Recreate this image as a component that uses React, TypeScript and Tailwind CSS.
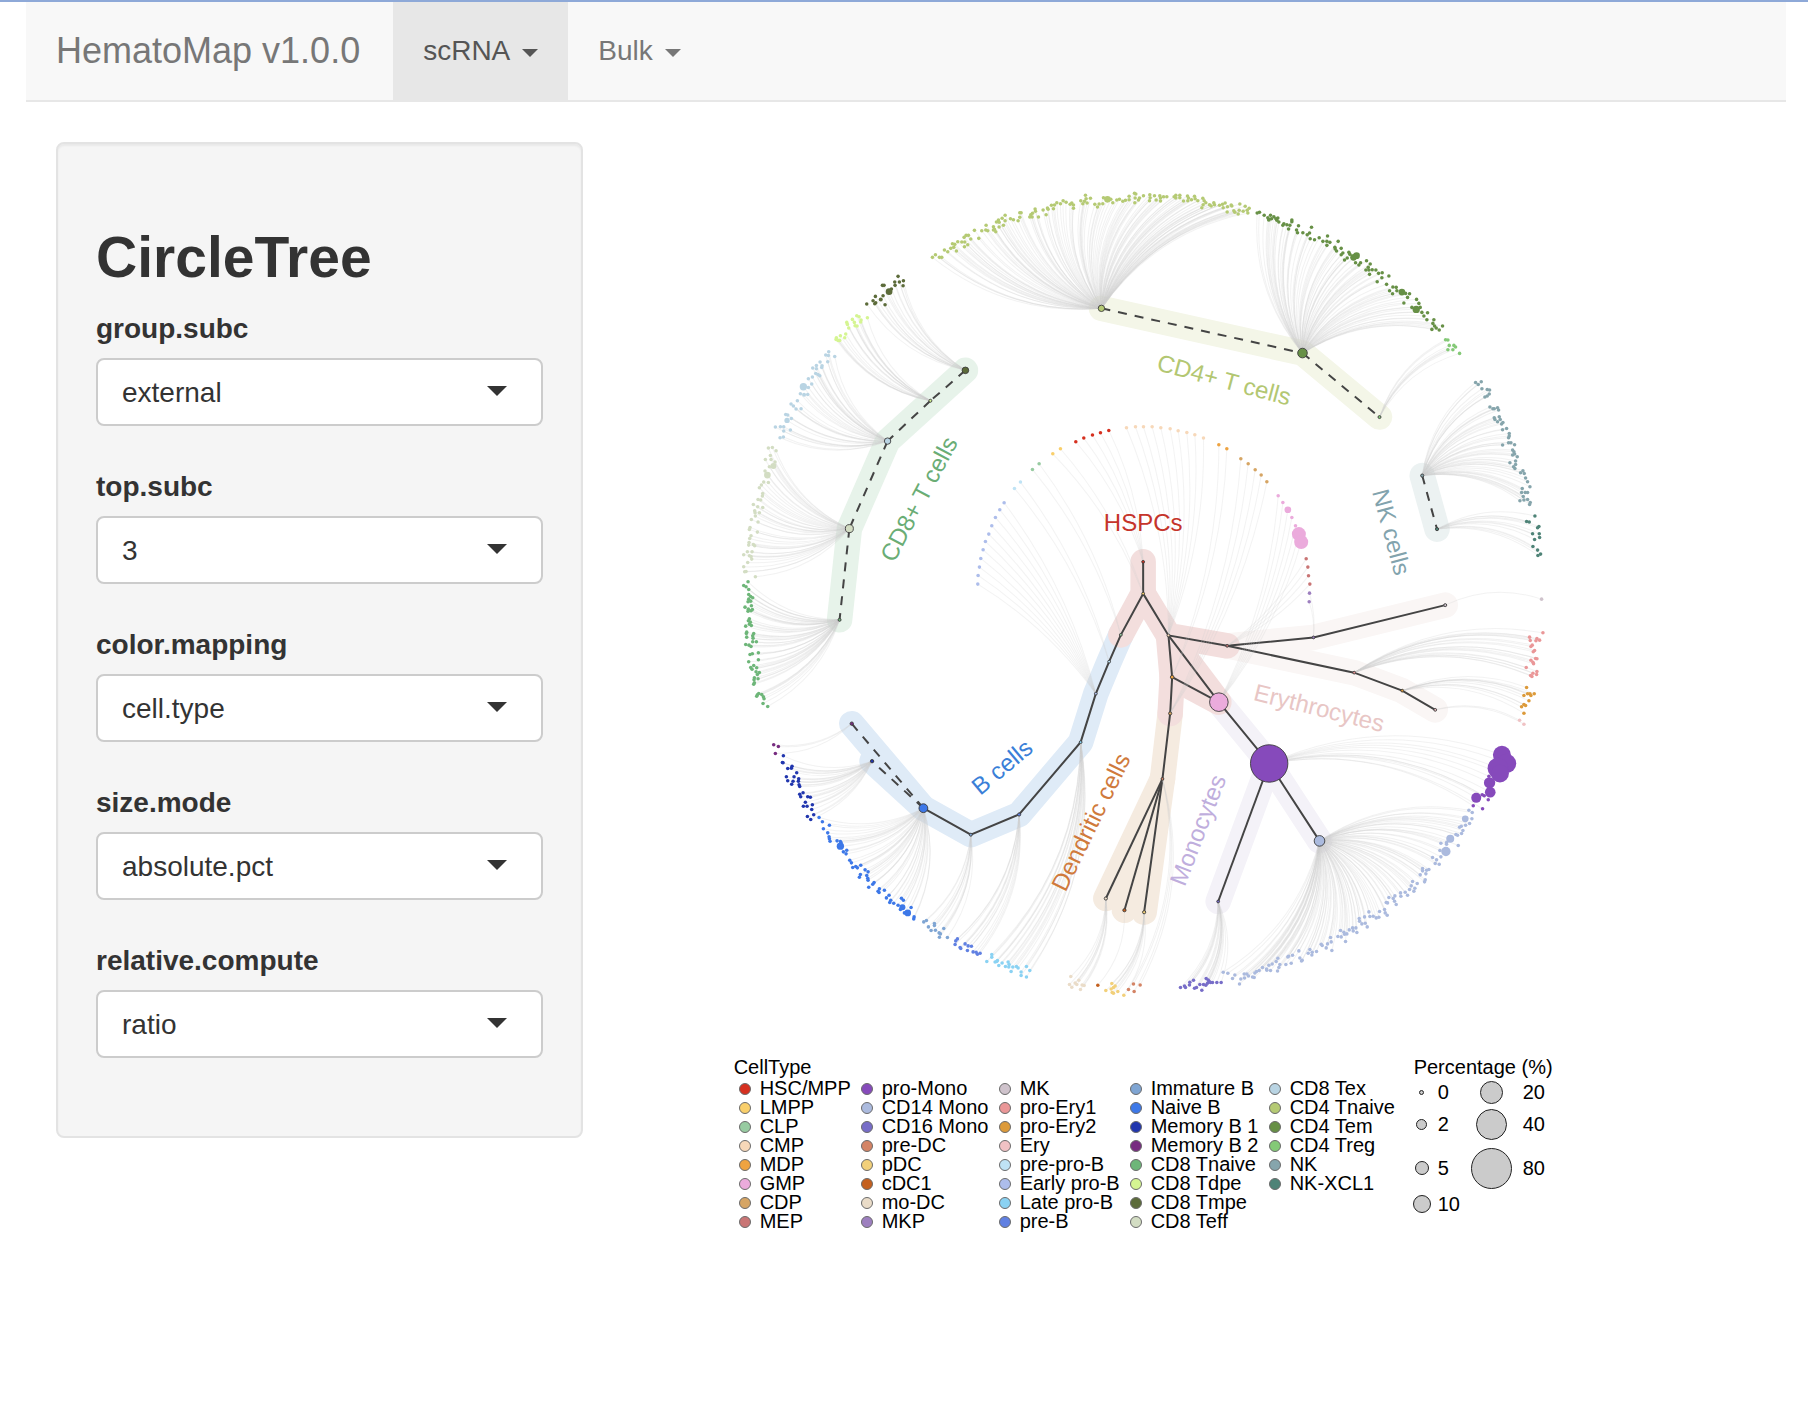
import React from "react";

type Point = { x: number; y: number };
type Leaf = Point & { r: number };
type NodeId = keyof typeof nodes;

const palette = {
  "HSC/MPP": "#d6301f",
  LMPP: "#f9cf6b",
  CLP: "#97cba1",
  CMP: "#f7d8b9",
  MDP: "#eea341",
  GMP: "#ebabdc",
  CDP: "#d6a564",
  MEP: "#c97575",
  "pro-Mono": "#864abb",
  "CD14 Mono": "#abbade",
  "CD16 Mono": "#776dc8",
  "pre-DC": "#d48465",
  pDC: "#f2d07a",
  cDC1: "#c4601f",
  "mo-DC": "#eadcc8",
  MKP: "#9d7fbf",
  MK: "#cfc3cc",
  "pro-Ery1": "#ea9798",
  "pro-Ery2": "#dc9a3a",
  Ery: "#f0c2c4",
  "pre-pro-B": "#bfe3f5",
  "Early pro-B": "#adbdeb",
  "Late pro-B": "#8ad2f3",
  "pre-B": "#6080e2",
  "Immature B": "#7fa5d3",
  "Naive B": "#3d78e8",
  "Memory B 1": "#2136ae",
  "Memory B 2": "#772c80",
  "CD8 Tnaive": "#6eb679",
  "CD8 Tdpe": "#d5f592",
  "CD8 Tmpe": "#5c6b3a",
  "CD8 Teff": "#d3ddc3",
  "CD8 Tex": "#b9d4e3",
  "CD4 Tnaive": "#b5ca74",
  "CD4 Tem": "#679046",
  "CD4 Treg": "#84c977",
  NK: "#86a5ac",
  "NK-XCL1": "#4e8377",
};

/* Tree nodes: x, y, radius */
const nodes = {
  "HSC/MPP": [1143, 561.7, 1.4],
  LMPP: [1143, 593.5, 1.4],
  CLP: [1120.7, 634.7, 1.4],
  CMP: [1168.3, 635.3, 1.4],
  MDP: [1172, 677, 1.8],
  GMP: [1218.7, 702, 9.3],
  CDP: [1170, 713.3, 1.6],
  MEP: [1227, 645.7, 1.4],
  "pro-Mono": [1269, 763.3, 18.7],
  "CD14 Mono": [1319.3, 840.7, 5.3],
  "CD16 Mono": [1218, 901.3, 1.4],
  "pre-DC": [1162.3, 778.7, 1.4],
  pDC: [1144, 912, 1.6],
  cDC1: [1124.3, 910, 1.6],
  "mo-DC": [1105.7, 898.3, 1.6],
  MKP: [1313.3, 637.3, 1.4],
  MK: [1445, 605, 1.5],
  "pro-Ery1": [1354, 672.5, 1.4],
  "pro-Ery2": [1402, 690.5, 1.4],
  Ery: [1435, 709.7, 1.4],
  "pre-pro-B": [1109, 661.5, 1.4],
  "Early pro-B": [1095.7, 693.5, 1.4],
  "Late pro-B": [1080.5, 742, 1.4],
  "pre-B": [1019, 814.3, 1.6],
  "Immature B": [970.7, 834.5, 1.5],
  "Naive B": [923.3, 808, 4.4],
  "Memory B 1": [872, 761, 1.7],
  "Memory B 2": [851.7, 723.5, 1.7],
  "CD8 Tnaive": [839.5, 619.7, 1.5],
  "CD8 Teff": [849.3, 528.5, 4],
  "CD8 Tex": [887.5, 441, 3.2],
  "CD8 Tdpe": [930.3, 400.7, 1.5],
  "CD8 Tmpe": [965.3, 370.3, 3.3],
  "CD4 Tnaive": [1101.3, 308.3, 3.2],
  "CD4 Tem": [1302.3, 353, 4.8],
  "CD4 Treg": [1379.3, 417, 1.5],
  NK: [1422, 475.5, 1.6],
  "NK-XCL1": [1436.8, 529, 1.6],
} as const;

/* Reads "x,y[,r] ..." tuples stored at triple resolution, relative to an origin. */
function cloud(ox: number, oy: number, data: string): Leaf[] {
  return data
    .trim()
    .split(/\s+/)
    .map((t) => {
      const [x, y, r = 5.3] = t.split(",").map(Number);
      return { x: ox + x / 3, y: oy + y / 3, r: r / 3 };
    });
}

const inner: [NodeId, Leaf[]][] = [
  ["Early pro-B", cloud(940, 400, "192,308 179,329 166,352 155,377 146,402 136,424 129,449 122,475 118,501 114,526 113,552")],
  ["pre-pro-B", cloud(940, 400, "241,246 223,265")],
  ["CLP", cloud(940, 400, "297,191 277,208")],
  ["LMPP", cloud(940, 400, "361,146 338,161")],
  ["HSC/MPP", cloud(940, 400, "407,125 431,114 457,105 481,98 506,91")],
  ["CMP", cloud(940, 400, "559,83 586,80 610,80 636,80 662,83 690,86 714,92 740,97 764,104 790,114")],
  ["MDP", cloud(940, 400, "836,134 860,146")],
  ["CDP", cloud(940, 400, "902,176 924,191 945,209 963,225 980,245")],
  ["GMP", cloud(940, 400, "1014,287 1028,307 1043,329,10 1055,352 1066,377 1076,402,21 1083,426,21")],
  ["MEP", cloud(940, 400, "1098,476 1103,501 1105,527 1109,552")],
  ["MKP", cloud(940, 400, "1108,579 1107,605")],
];

const outer: [NodeId, Leaf[]][] = [
  ["CD8 Tmpe", cloud(720, 170, "534,319 550,332 524,336 538,336 549,347 525,346 487,346 492,346 514,357 507,365,10 489,377 466,379 482,388,6 459,392 467,398 464,401 440,402 495,404")],
  ["CD8 Tdpe", cloud(720, 170, "410,437 417,440 442,443 397,448 423,450 422,456 380,457 403,457 382,463 405,467 411,468 386,474 377,492 361,497 374,503 349,503 348,508 354,511 359,511")],
  ["CD8 Tex", cloud(720, 170, "326,545 317,555 325,556 344,559 323,575 300,576 289,586 306,587 278,594 289,596 305,592 287,610 294,613 299,617 277,621 265,626 275,642 250,650,11 265,652 241,671 252,674,6 263,673 232,692 213,702 220,708 228,717 243,716 203,735 197,733 214,745 201,751,8 166,771 181,770 191,770 191,783 211,780 180,803 190,801")],
  ["CD8 Teff", [
    ...cloud(720, 170, "145,834 157,832 168,842 151,856 136,868 153,868 165,876 160,888,9 148,890 135,903 142,915,10 131,936 145,937 124,945 118,953 128,970 127,978 114,988 122,990 100,1003 113,1010 128,1012 104,1022 105,1028 118,1028 106,1038 94,1048 114,1056 90,1072 88,1078 112,1086"),
    ...cloud(720, 500, "93,107 89,115 87,127 86,135 100,133 104,137 96,155 82,155 71,164 88,167 93,169 95,177 83,187 71,200 78,214 74,215 106,230"),
  ]],
  ["CD8 Tnaive", cloud(720, 500, "84,245 71,256 78,260 86,268 86,283 92,289 98,293 86,297 84,305 92,303 75,321 94,317 85,327 93,332 97,328 84,333 88,356 85,362 91,366 88,372 94,376 77,378 80,396 101,400 79,400 98,407 80,411 99,414 98,425 109,425 77,433 87,435 93,439 90,463 97,461 115,458 115,479 86,485 101,496 92,502 96,507 110,503 108,515 118,517 112,523 103,533 114,536 102,539 103,548 101,552 116,580 112,584 110,588 125,583 130,590 132,596 129,610 143,619")],
  ["Memory B 2", cloud(740, 700, "101,134 115,139 106,160")],
  ["Memory B 1", cloud(740, 700, "130,167 129,188 127,187 156,198 143,205 154,204 170,218 139,230 162,230 176,236 143,242 159,243 175,243 155,252 177,254 179,259 189,278 179,282 182,290 203,290 211,291 196,306 190,318 201,318 217,314 215,328 202,349 221,344 212,358")],
  ["Naive B", cloud(740, 700, "237,352 247,365 268,375 250,386 263,398 267,410 268,416 270,423 291,422 301,424 303,428 301,438,11 320,450 310,455 318,461 329,480 334,488 338,502 347,499 352,503 362,495 375,509 384,515 361,523 358,531 380,526 383,534 384,540 402,547 398,552 386,561 418,566 433,570 414,573 417,577 447,585 439,593 452,600 449,607 461,609 484,594 490,600 474,615 487,621,9 481,628 513,622 493,638 503,638,10 522,650 521,656")],
  ["Immature B", cloud(740, 700, "551,665 559,661 583,670 583,676 565,680 573,691 586,690 611,685 597,698 601,701 598,711 622,712")],
  ["pre-B", cloud(740, 700, "652,716 647,722 645,733 660,742 662,745 675,731 684,737 694,738 682,751 699,755 708,756 712,762 720,759")],
  ["Late pro-B", cloud(740, 700, "755,763 755,771 740,784 765,785 772,781 770,784 776,796 786,788 804,785 796,799 807,793 806,800 818,800 813,814 829,799 834,803 859,799 869,811 843,815 843,826 859,830")],
  ["mo-DC", cloud(740, 700, "992,829 1016,840 988,853 1005,848 1010,853 995,861 1026,854 1032,856 1021,868")],
  ["cDC1", cloud(740, 700, "1073,855")],
  ["pDC", cloud(740, 700, "1115,850 1125,857 1120,862 1113,866 1097,871 1133,874 1116,877 1120,879 1151,885")],
  ["pre-DC", cloud(740, 700, "1180,851 1200,854 1165,868 1182,874")],
  ["CD16 Mono", cloud(1140, 680, "121,922 133,917 136,922 149,906 148,914 160,900 163,924 169,922 179,913 185,930 190,913 198,895 204,899 202,909 197,915 207,903 211,907 217,907 230,907 243,907")],
  ["CD14 Mono", cloud(1140, 680, "249,876 263,879 284,884 277,895 298,911 302,896 312,881 313,893 320,881 325,887 337,890 342,892 344,878 349,874 357,871 367,862 379,866 386,855 380,870 391,871 396,851 408,844 413,834 419,853 416,862 412,872 437,853 445,828 457,825 443,830 453,849 476,812 479,833 486,840 484,842 509,808 504,819 516,816 515,824 529,814 543,792 546,796 571,772 573,785 562,791 558,803 575,811 593,769 601,751 611,756 603,770 613,762 620,761 616,784 627,749 637,743 647,743 650,757 639,752 657,715 658,723 673,710 686,695 665,731 675,729 681,740 689,709 699,708 708,713 718,694 716,711 733,688 735,698 741,705 746,652 738,667 742,668 759,655 764,647 763,663 768,673 781,638 782,648 795,636 802,645 808,628 813,617 817,604 824,624 821,633 831,610 840,584 847,565 847,572 857,581 855,599 853,605 859,570 866,568 877,532 889,539 885,550 897,552 902,530 899,511 917,514,14 902,489 919,487 919,492 930,476,12 947,463 952,465 954,496 964,460 968,451 958,441 963,438 976,435 975,416,10 988,430 995,416 986,390 996,397")],
  ["pro-Mono", cloud(1140, 680, "1085,224,27 1099,250,29 1073,264,31 1079,280,27 1046,288 1048,308,17 1050,336,16 1026,344 1032,347 1008,353,15 1044,359 999,377 1027,386")],
  ["Ery", cloud(1140, 680, "1138,120 1151,132")],
  ["pro-Ery2", cloud(1140, 680, "1159,22 1151,46 1162,41 1169,41 1172,46 1182,41 1166,62 1151,73 1156,76 1144,80 1151,99")],
  ["pro-Ery1", cloud(1320, 560, "668,218 628,231 630,241 650,235 647,242 658,240 636,255 632,259 643,271 639,275 632,300 638,306 646,295 650,296 640,311 618,322 650,334 649,343 638,339 631,346 635,349")],
  ["MK", cloud(1320, 560, "664,117")],
  ["CD4 Tnaive", [
    ...cloud(720, 170, "637,262 646,254 658,262 665,262 673,240 683,245 692,235 701,232 697,221 709,243 713,215 704,223 725,216 734,216 733,230 743,224 732,202 738,196 745,196 752,207 763,181 776,205 785,182 798,166 797,180 803,182 820,170 823,178 827,185 820,180 837,171 829,156 835,150 855,136 846,145 855,152 850,166 837,157 871,146 880,149 899,128 903,128 899,142 894,152 945,117 946,124 932,134 937,130 929,141 936,141 955,141 969,120 978,134 982,114 984,118 994,106 1000,116 1003,105 1010,98 1021,101 1029,92 1038,97 1055,99 1050,103 1060,105 1060,115 1082,92 1096,76 1098,86 1111,85 1093,94 1101,99 1088,101 1124,103 1132,111 1137,102 1148,101 1150,83 1162,88,10 1172,88 1178,98 1190,90 1198,88 1208,94 1216,91 1227,79 1227,89"),
    ...cloud(1080, 170, "163,70 167,72 165,84 178,84 175,90 164,98 190,77 209,74 210,83 208,92 223,77 228,90 239,77 241,84 250,80 260,80 241,93 282,80 287,76 287,84 299,76 299,83 310,93 322,78 325,84 323,92 334,89 343,79 345,86 353,92 368,85 372,92 377,98 369,104 365,113 388,104 393,108 401,98 403,104 418,106 427,103 429,113 435,99 442,110 453,105 455,108 441,126 461,122 464,127 474,132 479,102 477,121 489,124 495,109 501,121 507,115 503,129"),
  ]],
  ["CD4 Tem", cloud(1080, 170, "531,129 538,127 552,136 571,136 563,143 566,149,6 574,146 581,140 587,146 593,144 590,151 596,156 611,161 608,166 620,164 629,166 635,150 635,155 625,177 655,167 649,180 652,188 668,188 681,194 688,189 694,172 690,206 703,209 717,203 728,214 742,198 740,214 749,217 740,226 774,214 764,232 765,237 769,243 783,235 788,249 783,254 793,270 806,247 809,253 801,264 820,262,10 829,257,10 826,278 841,278 836,285 859,272 870,282 864,292 857,300 866,300 876,299 887,300 868,313 895,310 906,308 905,323 926,318 891,335 919,343 928,362 938,351 948,352 937,371 950,362 965,366,10 976,370 988,371 982,382 971,399 1009,388 1016,400 995,412 1008,418,11 1020,412 1025,427 1031,438 1042,428 1040,449 1061,449 1058,460 1063,468 1055,478 1068,474 1077,480 1087,468")],
  ["CD4 Treg", cloud(1080, 170, "1096,509 1103,510 1107,526 1121,526 1126,531 1103,539 1118,539 1138,550")],
  ["NK", cloud(1080, 170, "1186,637 1194,643 1203,635 1205,656 1221,658 1228,660 1227,672 1221,678 1214,681 1229,711 1238,716 1242,716 1252,713 1255,720 1242,743 1244,748 1257,740 1260,748 1252,755 1264,762 1268,757 1279,775 1267,779 1287,790 1287,798 1285,803 1267,825 1285,818 1292,818 1303,824 1297,840 1301,845 1297,855 1303,852 1311,860 1306,873 1289,878 1306,883 1300,890 1304,895 1328,902 1321,908 1332,910 1336,924 1342,935 1349,950 1326,955 1324,967 1335,967 1342,967 1329,979 1319,992 1331,990 1342,988 1350,997 1348,1003")],
  ["NK-XCL1", cloud(1080, 170, "1364,1038 1339,1054 1347,1056 1376,1069 1372,1073 1357,1091 1377,1091 1378,1102 1363,1108 1358,1129 1372,1140 1381,1152 1373,1156")],
];

/* Lineage highlights, painted back to front */
const bands: { color: string; paths: NodeId[][] }[] = [
  { color: "#f4f6e8", paths: [["CD4 Tnaive", "CD4 Tem", "CD4 Treg"]] },
  { color: "#e7f3ea", paths: [["CD8 Tmpe", "CD8 Tex", "CD8 Teff", "CD8 Tnaive"]] },
  { color: "#ecf2f2", paths: [["NK", "NK-XCL1"]] },
  {
    color: "#dfebf7",
    paths: [
      ["CLP", "pre-pro-B", "Early pro-B", "Late pro-B", "pre-B", "Immature B", "Naive B", "Memory B 2"],
      ["Naive B", "Memory B 1"],
    ],
  },
  {
    color: "#faf6f5",
    paths: [
      ["MEP", "MKP", "MK"],
      ["MEP", "pro-Ery1", "pro-Ery2", "Ery"],
    ],
  },
  {
    color: "#f4f2f8",
    paths: [
      ["GMP", "pro-Mono", "CD14 Mono"],
      ["pro-Mono", "CD16 Mono"],
    ],
  },
  {
    color: "#f5ebe0",
    paths: [
      ["CDP", "pre-DC", "pDC"],
      ["pre-DC", "cDC1"],
      ["pre-DC", "mo-DC"],
    ],
  },
  {
    color: "#f3dedd",
    paths: [
      ["HSC/MPP", "LMPP", "CLP"],
      ["LMPP", "CMP", "MEP"],
      ["CMP", "MDP", "CDP"],
      ["CMP", "GMP", "MDP"],
    ],
  },
];

const solidEdges: NodeId[][] = [
  ["HSC/MPP", "LMPP", "CLP", "pre-pro-B", "Early pro-B", "Late pro-B", "pre-B", "Immature B", "Naive B"],
  ["LMPP", "CMP", "MEP", "MKP", "MK"],
  ["MEP", "pro-Ery1", "pro-Ery2", "Ery"],
  ["CMP", "MDP", "CDP", "pre-DC", "pDC"],
  ["pre-DC", "cDC1"],
  ["pre-DC", "mo-DC"],
  ["MDP", "GMP"],
  ["CMP", "GMP", "pro-Mono", "CD14 Mono"],
  ["pro-Mono", "CD16 Mono"],
];

const dashedEdges: NodeId[][] = [
  ["CD4 Tnaive", "CD4 Tem"],
  ["CD4 Tem", "CD4 Treg"],
  ["CD8 Tmpe", "CD8 Tdpe"],
  ["CD8 Tdpe", "CD8 Tex"],
  ["CD8 Tex", "CD8 Teff"],
  ["CD8 Teff", "CD8 Tnaive"],
  ["NK", "NK-XCL1"],
  ["Memory B 2", "Naive B"],
  ["Naive B", "Memory B 1"],
];

const lineageLabels = [
  { text: "HSPCs", x: 1143, y: 523, angle: 0, color: "#c5342b" },
  { text: "CD4+ T cells", x: 1224, y: 380, angle: 15, color: "#b3c772" },
  { text: "CD8+ T cells", x: 919, y: 499, angle: -62, color: "#6aad75" },
  { text: "NK cells", x: 1391, y: 532, angle: 75, color: "#82a3ad" },
  { text: "Erythrocytes", x: 1319, y: 708, angle: 14, color: "#e8c6c5" },
  { text: "B cells", x: 1002, y: 767, angle: -40, color: "#3a7fd8" },
  { text: "Dendritic cells", x: 1091, y: 822, angle: -64, color: "#d07a3c" },
  { text: "Monocytes", x: 1198, y: 830, angle: -69, color: "#bfaedd" },
];

function polyline(ids: NodeId[]) {
  return ids.map((id) => `${nodes[id][0]},${nodes[id][1]}`).join(" ");
}

/* Arc from a node to a leaf; positive bend bulges to the left of travel. */
function arc(id: NodeId, leaf: Point, bend: number) {
  const [x, y] = nodes[id];
  const dx = leaf.x - x;
  const dy = leaf.y - y;
  const cx = x + dx / 2 + dy * bend;
  const cy = y + dy / 2 - dx * bend;
  return `M${x} ${y}Q${cx.toFixed(1)} ${cy.toFixed(1)} ${leaf.x.toFixed(1)} ${leaf.y.toFixed(1)}`;
}

function CircleTreePlot() {
  return (
    <svg viewBox="643 142 1113 900" className="block w-full" role="img" aria-label="Circle tree of hematopoietic cell types">
      {bands.map((band) => (
        <g key={band.color} fill="none" stroke={band.color} strokeWidth="25.5" strokeLinecap="round" strokeLinejoin="round">
          {band.paths.map((p) => (
            <polyline key={p.join()} points={polyline(p)} />
          ))}
        </g>
      ))}
      <g fill="none" stroke="#444444" strokeWidth="2">
        {solidEdges.map((p) => (
          <polyline key={p.join()} points={polyline(p)} />
        ))}
        {dashedEdges.map((p) => (
          <polyline key={p.join()} points={polyline(p)} strokeDasharray="9 8" />
        ))}
      </g>
      <g fill="none" stroke="#cfcfcf" strokeWidth="1">
        <g strokeOpacity="0.27">
          {outer.map(([id, leaves]) => leaves.map((l, i) => <path key={id + i} d={arc(id, l, 0.2)} />))}
        </g>
        <g strokeOpacity="0.25">
          {inner.map(([id, leaves]) => leaves.map((l, i) => <path key={id + i} d={arc(id, l, -0.1)} />))}
        </g>
      </g>
      {[...outer, ...inner].map(([id, leaves]) => (
        <g key={id} fill={palette[id]}>
          {leaves.map((l, i) => (
            <circle key={i} cx={l.x} cy={l.y} r={l.r} />
          ))}
        </g>
      ))}
      <g stroke="#3c3c3c" strokeWidth="0.9">
        {(Object.keys(nodes) as NodeId[]).map((id) => (
          <circle key={id} cx={nodes[id][0]} cy={nodes[id][1]} r={nodes[id][2]} fill={palette[id]} />
        ))}
      </g>
      <g fontSize="24" textAnchor="middle">
        {lineageLabels.map((l) => (
          <text key={l.text} fill={l.color} dy="8" transform={`translate(${l.x} ${l.y}) rotate(${l.angle})`}>
            {l.text}
          </text>
        ))}
      </g>
    </svg>
  );
}

const percentages = [
  { value: "0", d: 5 },
  { value: "20", d: 23 },
  { value: "2", d: 11 },
  { value: "40", d: 31 },
  { value: "5", d: 14 },
  { value: "80", d: 41 },
  { value: "10", d: 18 },
];

function Legend() {
  return (
    <div className="flex pl-[91px] pt-[15px] text-[20px] leading-[19px] text-black">
      <section className="w-[680px]">
        <h2 className="h-[22px] leading-[20px]">CellType</h2>
        <ul className="grid grid-flow-col grid-cols-[122px_138px_131px_139px_146px] grid-rows-[repeat(8,19px)] pl-[5px]">
          {Object.entries(palette).map(([name, color]) => (
            <li key={name} className="flex items-center gap-[9px] whitespace-nowrap">
              <span className="size-3 shrink-0 rounded-full border border-[#6b6b6b]" style={{ backgroundColor: color }} />
              {name}
            </li>
          ))}
        </ul>
      </section>
      <section>
        <h2 className="h-[22px] whitespace-nowrap leading-[20px]">Percentage (%)</h2>
        <ul className="grid grid-cols-[57px_84px] grid-rows-[26px_38px_50px_22px]">
          {percentages.map((p, i) => (
            <li key={p.value} className="flex items-center">
              <span className={i % 2 ? "flex w-[52px] shrink-0 justify-center pr-2.5" : "flex w-6 shrink-0 justify-center pr-2"}>
                <span className="shrink-0 rounded-full border border-[#222] bg-[#cbcbcb]" style={{ width: p.d, height: p.d }} />
              </span>
              {p.value}
            </li>
          ))}
        </ul>
      </section>
    </div>
  );
}

function NavDropdown({ label, active }: { label: string; active?: boolean }) {
  return (
    <button
      type="button"
      aria-haspopup="menu"
      className={
        active
          ? "flex items-center gap-3 bg-[#e7e7e7] px-[30px] text-[28px] leading-[40px] text-[#555]"
          : "flex items-center gap-3 px-[30px] text-[28px] leading-[40px] text-[#777]"
      }
    >
      {label}
      <span className="mt-1 border-x-8 border-t-8 border-x-transparent border-t-current" />
    </button>
  );
}

const fields = [
  { name: "group.subc", value: "external", options: ["external", "internal"] },
  { name: "top.subc", value: "3", options: ["1", "2", "3"] },
  { name: "color.mapping", value: "cell.type", options: ["cell.type"] },
  { name: "size.mode", value: "absolute.pct", options: ["absolute.pct"] },
  { name: "relative.compute", value: "ratio", options: ["ratio"] },
];

function SelectField({ name, value, options }: { name: string; value: string; options: string[] }) {
  return (
    <div className="flex flex-col gap-2">
      <label htmlFor={name} className="text-[28px] font-bold leading-[42px]">
        {name}
      </label>
      <div className="relative">
        <select
          id={name}
          defaultValue={value}
          className="h-[68px] w-full appearance-none rounded-lg border-2 border-[#ccc] bg-white px-6 pt-0.5 text-[28px] leading-[40px] text-[#333]"
        >
          {options.map((o) => (
            <option key={o}>{o}</option>
          ))}
        </select>
        <span className="pointer-events-none absolute right-9 top-7 border-x-10 border-t-10 border-x-transparent border-t-[#333]" />
      </div>
    </div>
  );
}

export default function App() {
  return (
    <div className="min-h-screen border-t-2 border-[#8ea9d8] bg-white pl-[26px] pr-[22px] font-['Liberation_Sans',Arial,sans-serif] text-[#333]">
      <nav className="flex h-[100px] border-b-2 border-[#e7e7e7] bg-[#f8f8f8]">
        <a href="#" className="flex items-center pl-[30px] pr-[33px] text-[36px] leading-[40px] text-[#777]">
          HematoMap v1.0.0
        </a>
        <NavDropdown label="scRNA" active />
        <NavDropdown label="Bulk" />
      </nav>
      <div className="flex items-start pt-10">
        <aside className="w-1/3 px-[30px]">
          <form className="rounded-lg border-2 border-[#e3e3e3] bg-[#f5f5f5] px-[38px] pb-[78px] pt-[78px] shadow-[inset_0_2px_2px_rgba(0,0,0,0.05)]">
            <h1 className="pb-4 text-[57px] font-bold leading-[70px]">CircleTree</h1>
            <div className="flex flex-col gap-10">
              {fields.map((f) => (
                <SelectField key={f.name} {...f} />
              ))}
            </div>
          </form>
        </aside>
        <main className="w-2/3 px-[30px]">
          <CircleTreePlot />
          <Legend />
        </main>
      </div>
    </div>
  );
}
